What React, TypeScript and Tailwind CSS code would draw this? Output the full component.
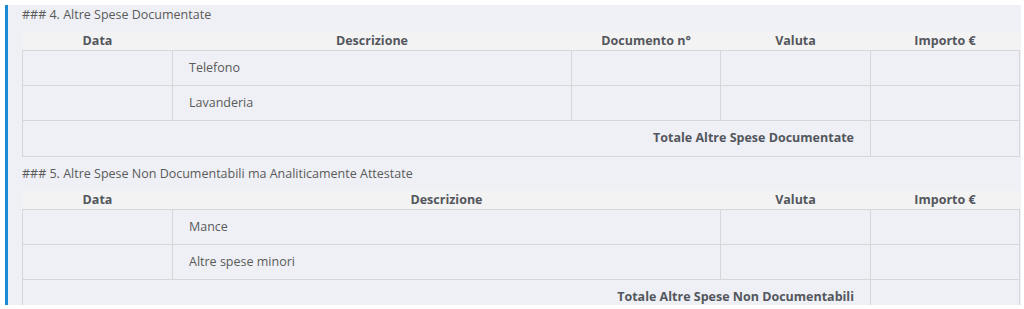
import React from 'react'

type Section = {
  title: string
  columns: { label: string; width: number }[]
  rows: string[]
  totalLabel: string
}

const sections: Section[] = [
  {
    title: '### 4. Altre Spese Documentate',
    columns: [
      { label: 'Data', width: 150 },
      { label: 'Descrizione', width: 399 },
      { label: 'Documento n°', width: 149 },
      { label: 'Valuta', width: 150 },
      { label: 'Importo €', width: 149 },
    ],
    rows: ['Telefono', 'Lavanderia'],
    totalLabel: 'Totale Altre Spese Documentate',
  },
  {
    title: '### 5. Altre Spese Non Documentabili ma Analiticamente Attestate',
    columns: [
      { label: 'Data', width: 150 },
      { label: 'Descrizione', width: 548 },
      { label: 'Valuta', width: 150 },
      { label: 'Importo €', width: 149 },
    ],
    rows: ['Mance', 'Altre spese minori'],
    totalLabel: 'Totale Altre Spese Non Documentabili',
  },
]

const cell = 'border border-[#d6d7da] h-[35px] px-[16px] align-middle'

const ExpenseTable: React.FC<{ section: Section }> = ({ section }) => {
  const cols = section.columns
  return (
    <div>
      <p className="h-[18px] leading-[18px] text-[12.5px] text-[#5a5a5a]">{section.title}</p>
      <table className="mt-[8px] w-[997px] table-fixed border-collapse">
        <colgroup>
          {cols.map((c) => (
            <col key={c.label} style={{ width: c.width }} />
          ))}
        </colgroup>
        <thead>
          <tr className="bg-[#f3f3f3]">
            {cols.map((c) => (
              <th key={c.label} className="h-[18px] p-0 text-center text-[12.5px] leading-[18px] font-bold text-[#53575d]">
                {c.label}
              </th>
            ))}
          </tr>
        </thead>
        <tbody>
          {section.rows.map((r) => (
            <tr key={r}>
              {cols.map((c, i) => (
                <td key={c.label} className={`${cell} text-[12.5px] text-[#5a5a5a]`}>
                  {i === 1 ? r : ''}
                </td>
              ))}
            </tr>
          ))}
          <tr>
            <td colSpan={cols.length - 1} className={`${cell} h-[36px] text-right text-[12.5px] font-bold text-[#53575d]`}>
              {section.totalLabel}
            </td>
            <td className={cell}></td>
          </tr>
        </tbody>
      </table>
    </div>
  )
}

export default function App() {
  return (
    <div className="h-[309px] w-[1024px] overflow-hidden bg-white pt-[5px] pl-[5px] font-['Open_Sans',sans-serif]">
      <div className="h-[300px] w-[1016px] overflow-hidden border-l-[3px] border-[#1a8bd6] bg-[#eef0f5] pl-[14px] pt-[1px]">
        <div className="flex flex-col gap-[8px]">
          {sections.map((s) => (
            <ExpenseTable key={s.title} section={s} />
          ))}
        </div>
      </div>
    </div>
  )
}
